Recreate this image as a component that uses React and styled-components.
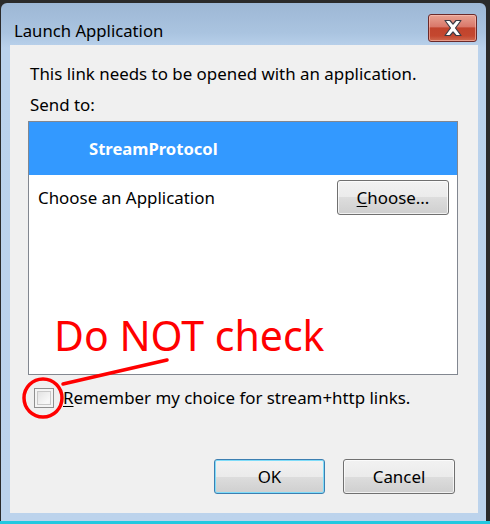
import styled, { createGlobalStyle } from 'styled-components';

const GlobalStyle = createGlobalStyle`
  html, body {
    margin: 0;
    padding: 0;
    background: #262626;
  }
  body {
    font-family: "Noto Sans", "Open Sans", sans-serif;
  }
`;

const Page = styled.div`
  position: relative;
  width: 490px;
  height: 524px;
  overflow: hidden;
  background: #2a2a2a;
  display: flex;
  flex-direction: column;
`;

const Frame = styled.div`
  margin: 3px 0 0 1px;
  width: 485px;
  height: 518px;
  box-sizing: border-box;
  border-radius: 6px 6px 0 0;
  background: linear-gradient(#9db7d5 0px, #aac4e0 30px, #bad2ec 45px, #bcd3ec 100%);
  padding: 0 8px 8px 9px;
  display: flex;
  flex-direction: column;
`;

const TitleBar = styled.div`
  height: 42px;
  display: flex;
  align-items: flex-start;
  justify-content: space-between;
  padding: 0 1px 0 4px;
`;

const Title = styled.div`
  margin-top: 18px;
  font-size: 16.7px;
  line-height: 20px;
  color: #000;
`;

const CloseButton = styled.div`
  margin-top: 11px;
  width: 49px;
  height: 28px;
  box-sizing: border-box;
  border: 1px solid #6b2a2a;
  border-radius: 3px;
  background: linear-gradient(#e8a293 0%, #d9786a 45%, #c1432d 50%, #c4472f 80%, #d06a50 100%);
  box-shadow: inset 0 0 0 1px rgba(255, 200, 190, 0.55);
  display: flex;
  align-items: center;
  justify-content: center;
`;

const Client = styled.div`
  flex: 1;
  background: #f0f0f0;
  padding: 19px 20px 0 18px;
  display: flex;
  flex-direction: column;
  font-size: 16.9px;
  color: #000;
`;

const Text = styled.div`
  line-height: 20px;
  padding-left: 2px;
  margin-bottom: ${(p) => p.$gap || 0}px;
`;

const ListBox = styled.div`
  height: 254px;
  box-sizing: border-box;
  border: 1px solid #828790;
  background: #fff;
  display: flex;
  flex-direction: column;
`;

const SelectedRow = styled.div`
  height: 53px;
  background: #3399ff;
  color: #fff;
  font-weight: 700;
  font-size: 16.6px;
  display: flex;
  align-items: center;
  padding-left: 60px;
`;

const AppRow = styled.div`
  height: 44px;
  display: flex;
  align-items: center;
  justify-content: space-between;
  padding: 0 8px 0 9px;
`;

const Button = styled.div`
  width: ${(p) => p.$w || 112}px;
  height: 35px;
  box-sizing: border-box;
  border: 1px solid ${(p) => (p.$default ? '#3c7fb1' : '#707070')};
  border-radius: 3px;
  background: linear-gradient(#f2f2f2 0%, #ebebeb 50%, #dddddd 50%, #cfcfcf 100%);
  box-shadow: inset 0 0 0 1px ${(p) => (p.$default ? '#7fdcf9' : 'rgba(255,255,255,0.7)')};
  display: flex;
  align-items: center;
  justify-content: center;
  font-size: 16.9px;
  color: #000;
`;

const CheckRow = styled.div`
  margin-top: 11px;
  display: flex;
  align-items: center;
  gap: 9px;
  padding-left: 6px;
`;

const Checkbox = styled.div`
  width: 20px;
  height: 20px;
  box-sizing: border-box;
  border: 1px solid #8f8f8f;
  background: linear-gradient(135deg, #dcdcdc, #f8f8f8 70%, #ececec);
  box-shadow: inset 0 0 0 2px #f4f4f4, inset 0 0 0 3px #c8c8c8;
`;

const Underline = styled.span`
  text-decoration: underline;
  text-underline-offset: 2px;
`;

const ButtonRow = styled.div`
  margin-top: 50px;
  display: flex;
  justify-content: flex-end;
  gap: 18px;
  padding-right: 3px;
`;

const CyanLine = styled.div`
  margin-top: auto;
  height: 3px;
  background: #22c8e0;
`;

const Annotation = styled.div`
  position: absolute;
  left: 54px;
  top: 310px;
  font-size: 41px;
  line-height: 50px;
  color: #ff0000;
  white-space: nowrap;
`;

const Overlay = styled.svg`
  position: absolute;
  left: 0;
  top: 0;
  pointer-events: none;
`;

export default function App() {
  return (
    <>
      <GlobalStyle />
      <Page>
        <Frame>
          <TitleBar>
            <Title>Launch Application</Title>
            <CloseButton>
              <svg width="20" height="18" viewBox="0 0 20 18">
                <path
                  d="M2 1.5h5l3 3.6 3-3.6h5l-5.5 7.5 5.5 7.5h-5l-3-3.6-3 3.6H2l5.5-7.5z"
                  fill="#fff"
                  stroke="#3c3c46"
                  strokeWidth="1.2"
                  strokeLinejoin="round"
                />
              </svg>
            </CloseButton>
          </TitleBar>
          <Client>
            <Text $gap={11}>This link needs to be opened with an application.</Text>
            <Text $gap={6}>Send to:</Text>
            <ListBox>
              <SelectedRow>StreamProtocol</SelectedRow>
              <AppRow>
                <span>Choose an Application</span>
                <Button>
                  <span>
                    <Underline>C</Underline>hoose...
                  </span>
                </Button>
              </AppRow>
            </ListBox>
            <CheckRow>
              <Checkbox />
              <span>
                <Underline>R</Underline>emember my choice for stream+http links.
              </span>
            </CheckRow>
            <ButtonRow>
              <Button $default $w={111}>OK</Button>
              <Button>Cancel</Button>
            </ButtonRow>
          </Client>
        </Frame>
        <CyanLine />
        <Annotation>Do NOT check</Annotation>
        <Overlay width="490" height="524">
          <line x1="167" y1="360" x2="63" y2="384" stroke="#ff0000" strokeWidth="3.5" strokeLinecap="round" />
          <circle cx="43" cy="398" r="19" fill="none" stroke="#ff0000" strokeWidth="3.5" />
        </Overlay>
      </Page>
    </>
  );
}
